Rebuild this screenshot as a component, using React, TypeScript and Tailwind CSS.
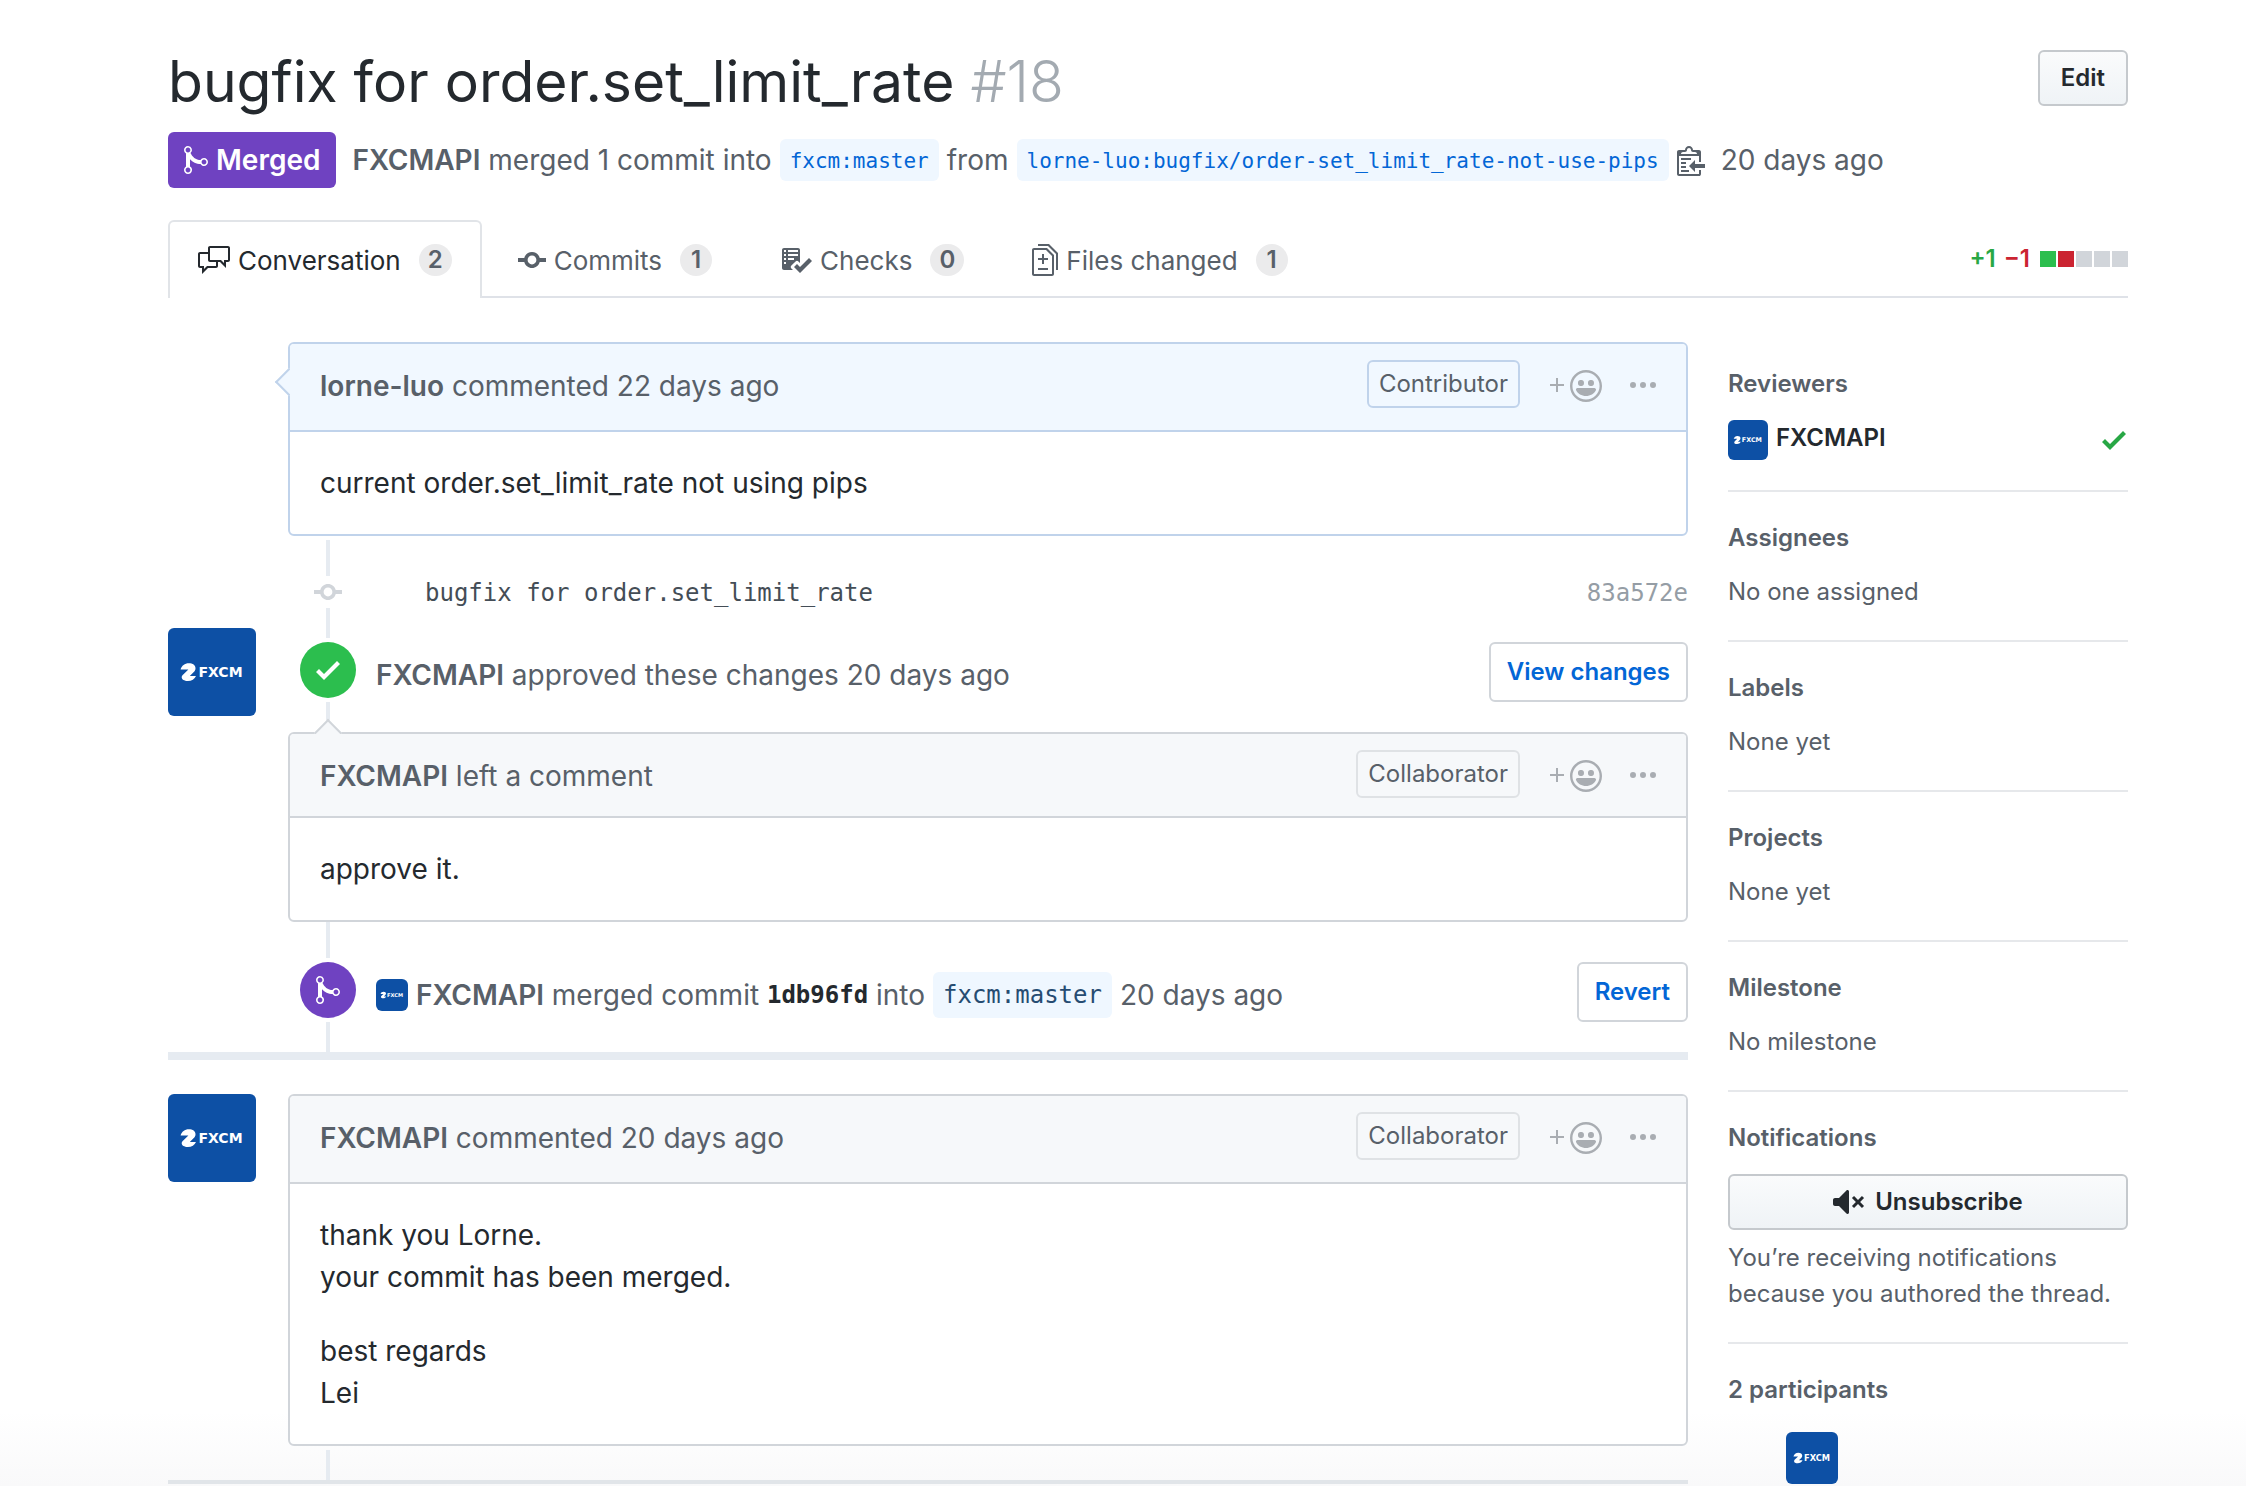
import type { ReactNode } from "react";

const paths = {
  merge:
    "M10 7c-.73 0-1.38.41-1.73 1.02V8C7.22 7.98 6 7.64 5.14 6.98c-.75-.58-1.5-1.61-1.89-2.44A1.993 1.993 0 0 0 2 .99C.89.99 0 1.89 0 3a2 2 0 0 0 1 1.72v6.56c-.59.35-1 .99-1 1.72 0 1.11.89 2 2 2a1.993 1.993 0 0 0 1-3.72V7.67c.67.7 1.44 1.27 2.3 1.69.86.42 2.03.63 2.97.64v-.02c.36.61 1 1.02 1.73 1.02 1.11 0 2-.89 2-2 0-1.11-.89-2-2-2zm-6.8 6c0 .66-.55 1.2-1.2 1.2-.65 0-1.2-.55-1.2-1.2 0-.65.55-1.2 1.2-1.2.65 0 1.2.55 1.2 1.2zM2 4.2C1.34 4.2.8 3.65.8 3c0-.65.55-1.2 1.2-1.2.65 0 1.2.55 1.2 1.2 0 .65-.55 1.2-1.2 1.2zm8 6c-.66 0-1.2-.55-1.2-1.2 0-.65.55-1.2 1.2-1.2.65 0 1.2.55 1.2 1.2 0 .65-.55 1.2-1.2 1.2z",
  discussion:
    "M15 1H6c-.55 0-1 .45-1 1v2H1c-.55 0-1 .45-1 1v6c0 .55.45 1 1 1h1v3l3-3h4c.55 0 1-.45 1-1V9h1l3 3V9h1c.55 0 1-.45 1-1V2c0-.55-.45-1-1-1zM9 11H4.5L3 12.5V11H1V5h4v3c0 .55.45 1 1 1h3v2zm6-3h-2v1.5L11.5 8H6V2h9v6z",
  commit:
    "M10.86 7c-.45-1.72-2-3-3.86-3-1.86 0-3.41 1.28-3.86 3H0v2h3.14c.45 1.72 2 3 3.86 3 1.86 0 3.41-1.28 3.86-3H14V7h-3.14zM7 10.2c-1.22 0-2.2-.98-2.2-2.2 0-1.22.98-2.2 2.2-2.2 1.22 0 2.2.98 2.2 2.2 0 1.22-.98 2.2-2.2 2.2z",
  checklist:
    "M16 8.5l-6 6-3-3L8.5 10l1.5 1.5L14.5 7 16 8.5zM5.7 12.2l.8.8H2c-.55 0-1-.45-1-1V3c0-.55.45-1 1-1h7c.55 0 1 .45 1 1v6.5l-.8-.8c-.39-.39-1.03-.39-1.42 0L5.7 10.8a.996.996 0 0 0 0 1.41v-.01zM4 4h5V3H4v1zm0 2h5V5H4v1zm0 2h3V7H4v1zM3 9H2v1h1V9zm0-2H2v1h1V7zm0-2H2v1h1V5zm0-2H2v1h1V3z",
  diff: "M6 7h2v1H6v2H5V8H3V7h2V5h1v2zm-3 6h5v-1H3v1zM7.5 2L11 5.5V15c0 .55-.45 1-1 1H1c-.55 0-1-.45-1-1V3c0-.55.45-1 1-1h6.5zM10 6L7 3H1v12h9V6zM8.5 0H3v1h5l4 4v8h1V4.5L8.5 0z",
  clippy:
    "M2 13h4v1H2v-1zm5-6H2v1h5V7zm2 3V8l-3 3 3 3v-2h5v-2H9zM4.5 9H2v1h2.5V9zM2 12h2.5v-1H2v1zm9 1h1v2c-.02.28-.11.52-.3.7-.19.18-.42.28-.7.3H1c-.55 0-1-.45-1-1V4c0-.55.45-1 1-1h3c0-1.11.89-2 2-2 1.11 0 2 .89 2 2h3c.55 0 1 .45 1 1v5h-1V6H1v9h10v-2zM2 5h8c0-.55-.45-1-1-1H8c-.55 0-1-.45-1-1s-.45-1-1-1-1 .45-1 1-.45 1-1 1H3c-.55 0-1 .45-1 1z",
  smiley:
    "M8 0C3.58 0 0 3.58 0 8s3.58 8 8 8 8-3.58 8-8-3.58-8-8-8zm4.81 12.81a6.72 6.72 0 0 1-2.17 1.45c-.83.36-1.72.53-2.64.53-.92 0-1.81-.17-2.64-.53-.81-.34-1.55-.83-2.17-1.45a6.773 6.773 0 0 1-1.45-2.17A6.59 6.59 0 0 1 1.21 8c0-.92.17-1.81.53-2.64.34-.81.83-1.55 1.45-2.17.62-.62 1.36-1.11 2.17-1.45A6.59 6.59 0 0 1 8 1.21c.92 0 1.81.17 2.64.53.81.34 1.55.83 2.17 1.45.62.62 1.11 1.36 1.45 2.17.36.83.53 1.72.53 2.64 0 .92-.17 1.81-.53 2.64-.34.81-.83 1.55-1.45 2.17zM4 6.8v-.59c0-.66.53-1.19 1.2-1.19h.59c.66 0 1.19.53 1.19 1.19v.59c0 .67-.53 1.2-1.19 1.2H5.2C4.53 8 4 7.47 4 6.8zm5 0v-.59c0-.66.53-1.19 1.2-1.19h.59c.66 0 1.19.53 1.19 1.19v.59c0 .67-.53 1.2-1.19 1.2h-.59C9.53 8 9 7.47 9 6.8zm4 3.2c-.72 1.88-2.91 3-5 3s-4.28-1.13-5-3c-.14-.39.23-1 .66-1h8.59c.41 0 .89.61.75 1z",
  plus: "M4 4H3v3H0v1h3v3h1V8h3V7H4V4z",
  kebab:
    "M1.5 9a1.5 1.5 0 1 0 0-3 1.5 1.5 0 0 0 0 3zm5 0a1.5 1.5 0 1 0 0-3 1.5 1.5 0 0 0 0 3zM13 7.5a1.5 1.5 0 1 1-3 0 1.5 1.5 0 0 1 3 0z",
  check: "M12 5l-8 8-4-4 1.5-1.5L4 10l6.5-6.5z",
  mute: "M8 2.81v10.38c0 .67-.81 1-1.28.53L3 10H1c-.55 0-1-.45-1-1V7c0-.55.45-1 1-1h2l3.72-3.72C7.19 1.81 8 2.14 8 2.81zm7.53 3.22l-1.06-1.06-1.97 1.97-1.97-1.97-1.06 1.06L11.44 8 9.47 9.97l1.06 1.06 1.97-1.97 1.97 1.97 1.06-1.06L13.56 8l1.97-1.97z",
};

function Icon({ name, width, className = "" }: { name: keyof typeof paths; width: number; className?: string }) {
  return (
    <svg
      aria-hidden="true"
      viewBox={`0 0 ${width} 16`}
      width={width * 2}
      height={32}
      fill="currentColor"
      className={`shrink-0 ${className}`}
    >
      <path fillRule="evenodd" d={paths[name]} />
    </svg>
  );
}

function Avatar({ className }: { className: string }) {
  return (
    <svg role="img" aria-label="FXCMAPI" viewBox="0 0 88 88" className={`shrink-0 bg-[#0d50a5] ${className}`}>
      <path
        fill="#fff"
        d="M12.600 41.500C13.600 37.700 16.800 35.300 20.800 35.300c3.900 0 6.700 2 6.700 4.900 0 1.600-.7 2.800-2 4.100L21.800 48h6.200c-1.300 3.100-4.400 5-8.100 5-3.700 0-6.200-1.500-6.200-3.700 0-1.100.6-2 1.800-3l4.900-4.800z"
      />
      <text x="30.500" y="48.500" fill="#fff" fontFamily="DejaVu Sans" fontWeight="700" fontSize="14">
        FXCM
      </text>
    </svg>
  );
}

function Tab({ icon, width, label, count, active = false }: { icon: keyof typeof paths; width: number; label: string; count: number; active?: boolean }) {
  return (
    <a
      href="#"
      aria-current={active ? "page" : undefined}
      className={
        active
          ? "-mb-0.5 flex items-center rounded-t-md border-2 border-b-0 border-[#e1e4e8] bg-white px-7 text-[#24292e]"
          : "flex items-center px-8 pt-1 text-[#586069]"
      }
    >
      <Icon name={icon} width={width} className="mr-2" />
      {label}
      <span className="ml-[18px] flex h-8 min-w-8 items-center justify-center rounded-full bg-[#ebebec] px-[9px] text-2xl leading-8 font-semibold text-[#586069]">
        {count}
      </span>
    </a>
  );
}

function Comment({
  author,
  action,
  role,
  tone = "gray",
  caret,
  compact = false,
  children,
}: {
  author: string;
  action: string;
  role: string;
  tone?: "gray" | "blue";
  caret?: "left" | "top";
  compact?: boolean;
  children: ReactNode;
}) {
  const blue = tone === "blue";
  return (
    <article className={`relative rounded-md border-2 bg-white ${blue ? "border-[#c0d3eb]" : "border-[#d1d5da]"}`}>
      {caret === "left" && (
        <span className="absolute top-7 -left-[11px] size-5 rotate-45 border-b-2 border-l-2 border-[#c0d3eb] bg-[#f1f8ff]" />
      )}
      {caret === "top" && (
        <span className="absolute -top-[11px] left-7 size-5 rotate-45 border-t-2 border-l-2 border-[#d1d5da] bg-[#f6f8fa]" />
      )}
      <header
        className={`relative flex items-start rounded-t-sm border-b-2 px-[30px] pt-4 ${compact ? "h-[84px]" : "h-[88px]"} ${
          blue ? "border-[#c0d3eb] bg-[#f1f8ff]" : "border-[#d1d5da] bg-[#f6f8fa]"
        }`}
      >
        <h3 className="flex-1 text-[28px] leading-[52px] text-[#586069]">
          <a href="#" className="font-semibold">{author}</a> {action}
        </h3>
        <span
          className={`flex h-12 items-center rounded-md border-2 px-2.5 text-2xl text-[#586069] ${
            blue ? "border-[#c0d3eb]" : "border-[#dfe2e5]"
          }`}
        >
          {role}
        </span>
        <button type="button" aria-label="Add reaction" className="mt-2.5 ml-[30px] flex items-center gap-1.5 text-[#a9adb2]">
          <Icon name="plus" width={7} />
          <Icon name="smiley" width={16} />
        </button>
        <button type="button" aria-label="More options" className="mt-2.5 ml-7 text-[#a9adb2]">
          <Icon name="kebab" width={13} />
        </button>
      </header>
      <div className="space-y-8 px-[30px] py-[30px] text-[28px] leading-[42px] text-[#24292e]">{children}</div>
    </article>
  );
}

function SideSection({ title, children }: { title: string; children: ReactNode }) {
  return (
    <section className="border-t-2 border-[#e6e8eb] pt-7 pb-[30px] first:border-t-0">
      <h2 className="mb-[18px] text-2xl leading-9 font-semibold text-[#586069]">{title}</h2>
      {children}
    </section>
  );
}

const line = "w-1 bg-[#e6ebf1]";

export default function App() {
  return (
    <div className="h-screen overflow-hidden bg-linear-to-b from-white from-95% to-[#f9f9fa] pt-[46px] pr-[118px] pl-[168px] font-[Inter,sans-serif] text-[#24292e]">
      <div className="flex items-start justify-between">
        <h1 className="text-[57px] leading-[72px]">
          bugfix for order.set_limit_rate <span className="font-light text-[#a3aab1]">#18</span>
        </h1>
        <button
          type="button"
          className="mt-1 h-14 rounded-md border-2 border-[#c5c9cd] bg-linear-to-b from-[#fafbfc] to-[#eff3f6] px-[21px] text-2xl font-semibold"
        >
          Edit
        </button>
      </div>

      <div className="mt-3.5 flex h-14 items-center text-[28px] whitespace-nowrap text-[#586069]">
        <span className="mr-4 flex h-14 items-center gap-2 rounded-md bg-[#6f42c1] px-4 font-semibold text-white">
          <Icon name="merge" width={12} />
          Merged
        </span>
        <span>
          <a href="#" className="font-semibold">FXCMAPI</a> merged 1 commit into
        </span>
        <a href="#" className="mx-2 rounded-md bg-[#eff7ff] px-2.5 pt-0.5 font-['DejaVu_Sans_Mono',monospace] text-[21px] leading-10 text-[#0366d6]">
          fxcm:master
        </a>
        from
        <a href="#" className="mx-2 rounded-md bg-[#eff7ff] px-2.5 pt-0.5 font-['DejaVu_Sans_Mono',monospace] text-[21px] leading-10 text-[#0366d6]">
          lorne-luo:bugfix/order-set_limit_rate-not-use-pips
        </a>
        <button type="button" aria-label="Copy branch name" className="mr-4">
          <Icon name="clippy" width={14} />
        </button>
        20 days ago
      </div>

      <nav aria-label="Pull request" className="mt-8 flex h-[78px] justify-between border-b-2 border-[#dfe2e8] text-[26px]">
        <div className="flex gap-1">
          <Tab active icon="discussion" width={16} label="Conversation" count={2} />
          <Tab icon="commit" width={14} label="Commits" count={1} />
          <Tab icon="checklist" width={16} label="Checks" count={0} />
          <Tab icon="diff" width={13} label="Files changed" count={1} />
        </div>
        <div className="flex items-center gap-2 pt-0.5 text-2xl font-semibold">
          <span className="text-[#28a745]">+1</span>
          <span className="text-[#cb2431]">−1</span>
          <span className="ml-0.5 flex gap-0.5">
            <span className="size-4 bg-[#2cbe4e]" />
            <span className="size-4 bg-[#cb2431]" />
            <span className="size-4 bg-[#d1d5da]" />
            <span className="size-4 bg-[#d1d5da]" />
            <span className="size-4 bg-[#d1d5da]" />
          </span>
        </div>
      </nav>

      <div className="mt-11 flex items-start gap-10">
        <main className="min-w-0 flex-1">
          <div className="pl-[120px]">
            <Comment author="lorne-luo" action="commented 22 days ago" role="Contributor" tone="blue" caret="left">
              <p>current order.set_limit_rate not using pips</p>
            </Comment>

            <div className="flex items-start font-['DejaVu_Sans_Mono',monospace] text-2xl leading-9">
              <div className="flex w-20 shrink-0 flex-col items-center py-1">
                <span className={`h-9 ${line}`} />
                <Icon name="commit" width={14} className="text-[#d1d5da]" />
                <span className={`h-[30px] ${line}`} />
              </div>
              <a href="#" className="mt-[39px] ml-[57px] flex-1 text-[#444d56]">bugfix for order.set_limit_rate</a>
              <a href="#" className="mt-[39px] text-[#959da5]">83a572e</a>
            </div>
          </div>

          <div className="flex items-start">
            <Avatar className="-mt-3.5 mr-8 size-[88px] rounded-md" />
            <div className="flex w-20 shrink-0 flex-col items-center">
              <span className="mb-1 flex size-14 items-center justify-center rounded-full bg-[#2cbe4e] text-white">
                <Icon name="check" width={12} />
              </span>
              <span className={`h-[30px] ${line}`} />
            </div>
            <p className="ml-2 flex-1 text-[28px] leading-[66px] text-[#586069]">
              <a href="#" className="font-semibold">FXCMAPI</a> approved these changes 20 days ago
            </p>
            <button type="button" className="h-[60px] rounded-md border-2 border-[#d1d5da] bg-white px-4 text-2xl font-semibold text-[#0366d6]">
              View changes
            </button>
          </div>

          <div className="pl-[120px]">
            <Comment author="FXCMAPI" action="left a comment" role="Collaborator" caret="top" compact>
              <p>approve it.</p>
            </Comment>

            <div className="flex items-start">
              <div className="flex w-20 shrink-0 flex-col items-center">
                <span className={`h-9 ${line}`} />
                <span className="my-1 flex size-14 items-center justify-center rounded-full bg-[#6f42c1] text-white">
                  <Icon name="merge" width={12} />
                </span>
                <span className={`h-[30px] ${line}`} />
              </div>
              <div className="mt-10 ml-2 flex flex-1 items-center text-[28px] leading-[66px] whitespace-pre text-[#586069]">
                <Avatar className="mr-2 size-8 rounded-md" />
                <a href="#" className="font-semibold">FXCMAPI</a> merged commit{" "}
                <a href="#" className="font-['DejaVu_Sans_Mono',monospace] text-2xl font-bold text-[#24292e]">1db96fd</a> into
                <a href="#" className="mx-2 rounded-md bg-[#eff7ff] px-2.5 font-['DejaVu_Sans_Mono',monospace] text-2xl leading-[46px] text-[#264c72]">
                  fxcm:master
                </a>
                20 days ago
              </div>
              <button type="button" className="mt-10 h-[60px] rounded-md border-2 border-[#d1d5da] bg-white px-4 text-2xl font-semibold text-[#0366d6]">
                Revert
              </button>
            </div>
          </div>

          <hr className="mb-[34px] h-2 border-0 bg-[#e6ebf1]" />

          <div className="flex items-start">
            <Avatar className="mr-8 size-[88px] rounded-md" />
            <div className="flex-1">
              <Comment author="FXCMAPI" action="commented 20 days ago" role="Collaborator">
                <p>
                  thank you Lorne.
                  <br />
                  your commit has been merged.
                </p>
                <p>
                  best regards
                  <br />
                  Lei
                </p>
              </Comment>
              <div className="flex w-20 justify-center pt-1">
                <span className={`h-[30px] ${line}`} />
              </div>
            </div>
          </div>
          <hr className="h-1 border-0 bg-[#e1e5e9]" />
        </main>

        <aside className="-mt-1 w-[400px] shrink-0 text-2xl leading-9 text-[#586069]">
          <SideSection title="Reviewers">
            <div className="flex items-start">
              <Avatar className="mr-2 size-10 rounded-md" />
              <a href="#" className="flex-1 font-semibold text-[#24292e]">FXCMAPI</a>
              <Icon name="check" width={12} className="mr-0.5 self-center text-[#28a745]" />
            </div>
          </SideSection>
          <SideSection title="Assignees">No one assigned</SideSection>
          <SideSection title="Labels">None yet</SideSection>
          <SideSection title="Projects">None yet</SideSection>
          <SideSection title="Milestone">No milestone</SideSection>
          <SideSection title="Notifications">
            <button
              type="button"
              className="mb-2.5 flex h-14 w-full items-center justify-center gap-2.5 rounded-md border-2 border-[#c5c9cd] bg-linear-to-b from-[#fafbfc] to-[#eff3f6] font-semibold text-[#24292e]"
            >
              <Icon name="mute" width={16} />
              Unsubscribe
            </button>
            <p>You’re receiving notifications because you authored the thread.</p>
          </SideSection>
          <SideSection title="2 participants">
            <Avatar className="mt-6 ml-[58px] size-[52px] rounded-md" />
          </SideSection>
        </aside>
      </div>
    </div>
  );
}
